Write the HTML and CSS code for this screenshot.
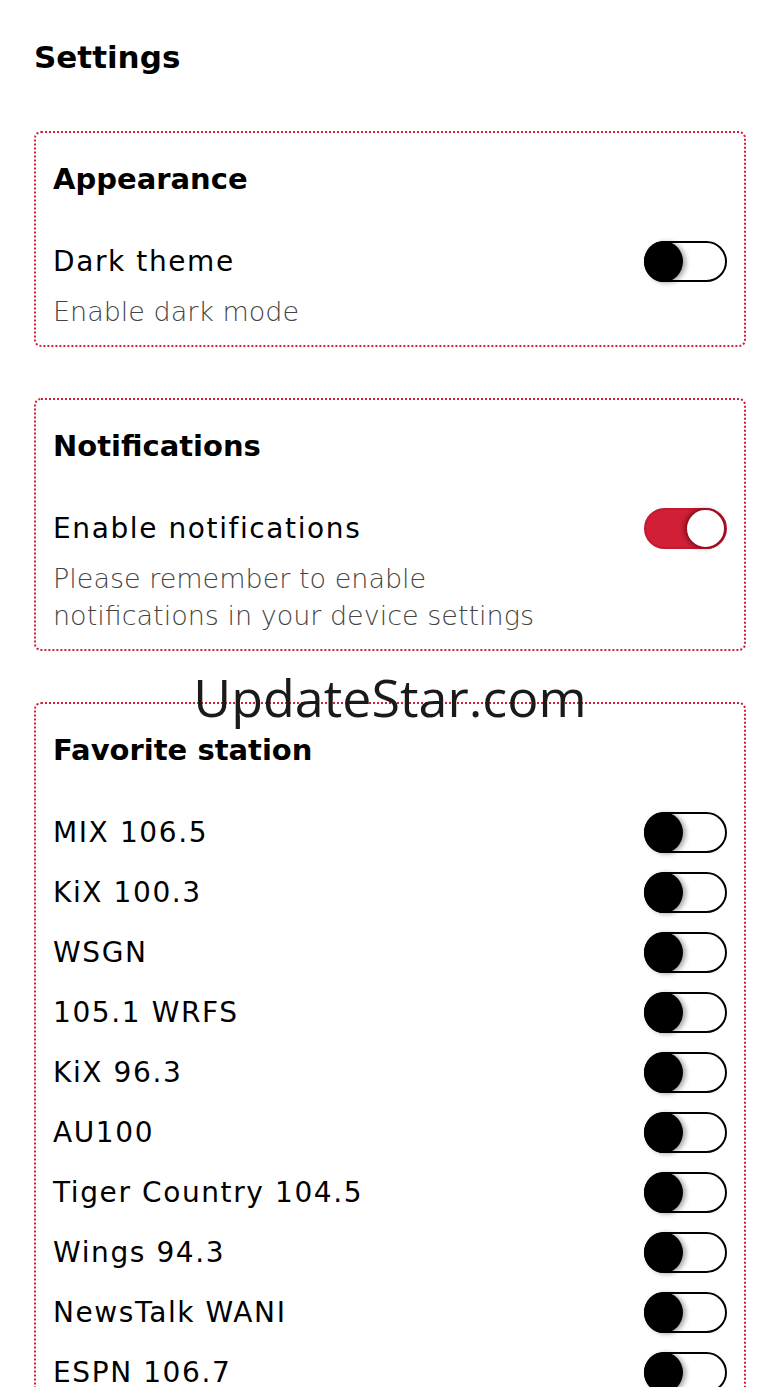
FILE: index.html
```html
<!DOCTYPE html>
<html lang="en">
<head>
  <meta charset="UTF-8">
  <meta name="viewport" content="width=device-width, initial-scale=1.0">
  <link rel="stylesheet" href="styles.css">
  <title>Settings</title>
</head>
<body>

<div class="page">
  <h1 class="page-title">Settings</h1>

  <section class="card">
    <h2 class="card-title">Appearance</h2>
    <div class="row">
      <span class="row-label">Dark theme</span>
      <span class="switch"><span class="knob"></span></span>
    </div>
    <p class="hint">Enable dark mode</p>
  </section>

  <section class="card">
    <h2 class="card-title">Notifications</h2>
    <div class="row">
      <span class="row-label">Enable notifications</span>
      <span class="switch on"><span class="knob"></span></span>
    </div>
    <p class="hint">Please remember to enable<br>notifications in your device settings</p>
  </section>

  <section class="card">
    <h2 class="card-title">Favorite station</h2>
    <div class="stations">
      <div class="row"><span class="row-label">MIX 106.5</span><span class="switch"><span class="knob"></span></span></div>
      <div class="row"><span class="row-label">KiX 100.3</span><span class="switch"><span class="knob"></span></span></div>
      <div class="row"><span class="row-label">WSGN</span><span class="switch"><span class="knob"></span></span></div>
      <div class="row"><span class="row-label">105.1 WRFS</span><span class="switch"><span class="knob"></span></span></div>
      <div class="row"><span class="row-label">KiX 96.3</span><span class="switch"><span class="knob"></span></span></div>
      <div class="row"><span class="row-label">AU100</span><span class="switch"><span class="knob"></span></span></div>
      <div class="row"><span class="row-label">Tiger Country 104.5</span><span class="switch"><span class="knob"></span></span></div>
      <div class="row"><span class="row-label">Wings 94.3</span><span class="switch"><span class="knob"></span></span></div>
      <div class="row"><span class="row-label">NewsTalk WANI</span><span class="switch"><span class="knob"></span></span></div>
      <div class="row"><span class="row-label">ESPN 106.7</span><span class="switch"><span class="knob"></span></span></div>
    </div>
  </section>
</div>

<div class="watermark">UpdateStar.com</div>

</body>
</html>
```

FILE: styles.css
```css
body {
  margin: 0;
  font-family: "DejaVu Sans", sans-serif;
  color: #000;
  background: #fff;
  overflow: hidden;
}
.page {
  padding: 35px 34px 0;
}
.page-title {
  margin: 0 0 52px;
  font-size: 31px;
  font-weight: 700;
  line-height: 44px;
}
.card {
  border: 2px dotted #d3203a;
  border-radius: 7px;
  padding: 26px 17px 15px;
  margin-bottom: 51px;
}
.card-title {
  margin: 0 0 41px;
  font-size: 29px;
  font-weight: 700;
  line-height: 40px;
}
.row {
  display: flex;
  justify-content: space-between;
  align-items: center;
  height: 42px;
}
.row-label {
  font-size: 28px;
  letter-spacing: 1.6px;
}
.hint {
  margin: 11px 0 0;
  font-size: 27px;
  font-weight: 200;
  color: #444;
  line-height: 37px;
}
.stations {
  display: flex;
  flex-direction: column;
  gap: 18px;
}
.switch {
  position: relative;
  width: 79px;
  height: 37px;
  border: 2px solid #000;
  border-radius: 21px;
  background: #fff;
  flex-shrink: 0;
}
.knob {
  position: absolute;
  left: -2px;
  top: -2px;
  width: 39px;
  height: 41px;
  border-radius: 50%;
  background: #000;
  box-shadow: 3px 1px 5px rgba(0, 0, 0, 0.35);
}
.switch.on {
  background: #d11f37;
  border-color: #c11a31;
}
.switch.on .knob {
  left: auto;
  right: -1px;
  background: #fff;
  border: 2px solid #9c1024;
  width: 37px;
  height: 37px;
  top: -2px;
  box-shadow: -2px 0 4px rgba(0, 0, 0, 0.25);
}
.watermark {
  position: absolute;
  top: 664px;
  left: 0;
  right: 0;
  text-align: center;
  font-family: "Open Sans", sans-serif;
  font-size: 52px;
  color: #1a1a1a;
  line-height: 66px;
}
```
